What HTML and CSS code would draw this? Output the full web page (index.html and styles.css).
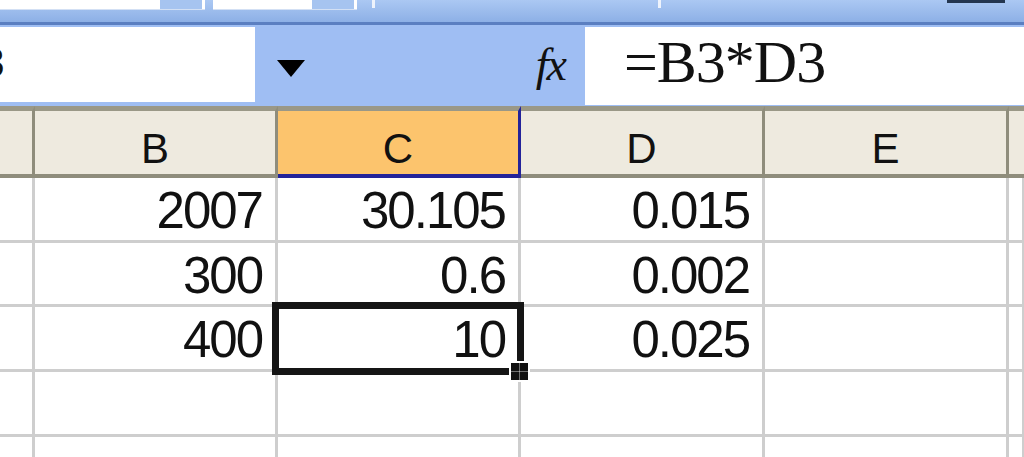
FILE: index.html
```html
<!DOCTYPE html>
<html lang="en">
<head>
    <meta charset="UTF-8">
    <meta name="viewport" content="width=device-width, initial-scale=1.0">
    <title>Sheet1</title>
    <link rel="stylesheet" href="styles.css">
</head>
<body>

<!-- Toolbar (cut off at the top) -->
<div class="toolbar">
    <div class="tb-box tb-box-wide"><span class="tb-btn"></span></div>
    <div class="tb-box tb-box-narrow"><span class="tb-btn"></span></div>
    <span class="tb-tick"></span>
    <span class="tb-tick tb-tick-far"></span>
    <span class="tb-dark"></span>
</div>

<!-- Formula bar -->
<div class="formula-bar">
    <div class="name-box"><span class="name-text">C3</span></div>
    <div class="name-drop">
        <svg class="drop-arrow" width="28" height="17" viewBox="0 0 28 17">
            <path d="M0 0 H28 L14 17 Z" fill="#000"/>
        </svg>
        <span class="fx">f<span class="fx-x">x</span></span>
    </div>
    <div class="formula-input">=B3*D3</div>
</div>

<!-- Grid -->
<section class="sheet">
    <div class="col-head"></div>
    <div class="col-head">B</div>
    <div class="col-head col-active">C</div>
    <div class="col-head">D</div>
    <div class="col-head">E</div>
    <div class="col-head col-last"></div>

    <div class="cell"></div>
    <div class="cell">2007</div>
    <div class="cell">30.105</div>
    <div class="cell">0.015</div>
    <div class="cell"></div>
    <div class="cell"></div>

    <div class="cell"></div>
    <div class="cell">300</div>
    <div class="cell">0.6</div>
    <div class="cell">0.002</div>
    <div class="cell"></div>
    <div class="cell"></div>

    <div class="cell"></div>
    <div class="cell">400</div>
    <div class="cell cell-selected">10<span class="sel-frame"></span><span class="fill-handle"></span></div>
    <div class="cell">0.025</div>
    <div class="cell"></div>
    <div class="cell"></div>

    <div class="cell"></div>
    <div class="cell"></div>
    <div class="cell"></div>
    <div class="cell"></div>
    <div class="cell"></div>
    <div class="cell"></div>

    <div class="cell cell-short"></div>
    <div class="cell cell-short"></div>
    <div class="cell cell-short"></div>
    <div class="cell cell-short"></div>
    <div class="cell cell-short"></div>
    <div class="cell cell-short"></div>
</section>

</body>
</html>
```

FILE: styles.css
```css
/* General */
body {
    margin: 0;
    padding: 0;
    width: 1024px;
    height: 457px;
    overflow: hidden;
    background: #fff;
    font-family: 'Liberation Sans', Arial, sans-serif;
    color: #111;
}

/* Toolbar strip */
.toolbar {
    display: flex;
    align-items: flex-start;
    height: 22px;
    background: linear-gradient(#abc8f3, #8db0e6);
    border-bottom: 3px solid #5b7fc1;
}

.tb-box {
    display: flex;
    justify-content: flex-end;
    height: 10px;
    padding-right: 3px;
    box-sizing: border-box;
    background: #fff;
    border-bottom: 1px solid #d3e0f4;
}

.tb-box-wide {
    width: 205px;
    margin-right: 8px;
}

.tb-box-narrow {
    width: 144px;
}

.tb-btn {
    width: 42px;
    height: 9px;
    background: #a6c4f0;
}

.tb-tick {
    width: 3px;
    height: 8px;
    margin-left: 15px;
    background: #eef3fc;
}

.tb-tick-far {
    margin-left: 283px;
}

.tb-dark {
    width: 58px;
    height: 3px;
    margin-left: auto;
    margin-right: 19px;
    background: #243650;
}

/* Formula bar */
.formula-bar {
    display: flex;
    align-items: flex-start;
    height: 81px;
    padding-top: 2px;
    box-sizing: border-box;
    background: #9fbef3;
}

.name-box {
    width: 255px;
    height: 75px;
    background: #fff;
    overflow: hidden;
    display: flex;
    align-items: center;
}

.name-text {
    font-size: 42px;
    margin-left: -49px;
    padding-bottom: 4px;
}

.name-drop {
    display: flex;
    align-items: flex-start;
    width: 330px;
    height: 75px;
}

.drop-arrow {
    margin-left: 22px;
    margin-top: 33px;
}

.fx {
    margin-left: auto;
    margin-right: 18px;
    margin-top: 14px;
    font-family: 'Liberation Serif', 'Times New Roman', serif;
    font-style: italic;
    font-size: 46px;
    line-height: 48px;
}

.fx-x {
    margin-left: -2px;
}

.formula-input {
    flex: 1;
    height: 78px;
    padding-left: 39px;
    padding-top: 2px;
    box-sizing: border-box;
    background: #fff;
    font-family: 'Liberation Serif', 'Times New Roman', serif;
    font-size: 60px;
    line-height: 66px;
    letter-spacing: -1px;
}

/* Sheet grid */
.sheet {
    display: grid;
    grid-template-columns: 35px 243px 243px 244px 244px 1fr;
    grid-template-rows: 72px repeat(4, 64.7px) 20px;
}

.col-head {
    display: flex;
    align-items: center;
    justify-content: center;
    padding-top: 12px;
    box-sizing: border-box;
    background: #eeeadf;
    border-top: 5px solid #9a9887;
    border-bottom: 4px solid #8f8d7c;
    border-right: 3px solid #8f8d7c;
    font-size: 42px;
}

.col-active {
    background: #fcc46d;
    border-right-color: #23239a;
    border-bottom-color: #23239a;
}

.col-last {
    border-right: none;
}

.cell {
    display: flex;
    align-items: center;
    justify-content: flex-end;
    padding: 3px 13px 0 0;
    box-sizing: border-box;
    border-right: 3px solid #cecece;
    border-bottom: 3px solid #cecece;
    font-size: 51px;
    letter-spacing: -2px;
}

.cell-short {
    border-bottom: none;
}

/* Active cell */
.cell-selected {
    position: relative;
}

.sel-frame {
    position: absolute;
    left: -6px;
    top: -5px;
    right: -6px;
    bottom: -6px;
    border: 7px solid #151515;
}

.fill-handle {
    position: absolute;
    right: -12px;
    bottom: -13px;
    width: 17px;
    height: 17px;
    border: 2px solid #fff;
    background-color: #111;
    background-image:
        linear-gradient(90deg, transparent 45%, rgba(255, 255, 255, 0.4) 45%, rgba(255, 255, 255, 0.4) 55%, transparent 55%),
        linear-gradient(transparent 45%, rgba(255, 255, 255, 0.4) 45%, rgba(255, 255, 255, 0.4) 55%, transparent 55%);
}
```
